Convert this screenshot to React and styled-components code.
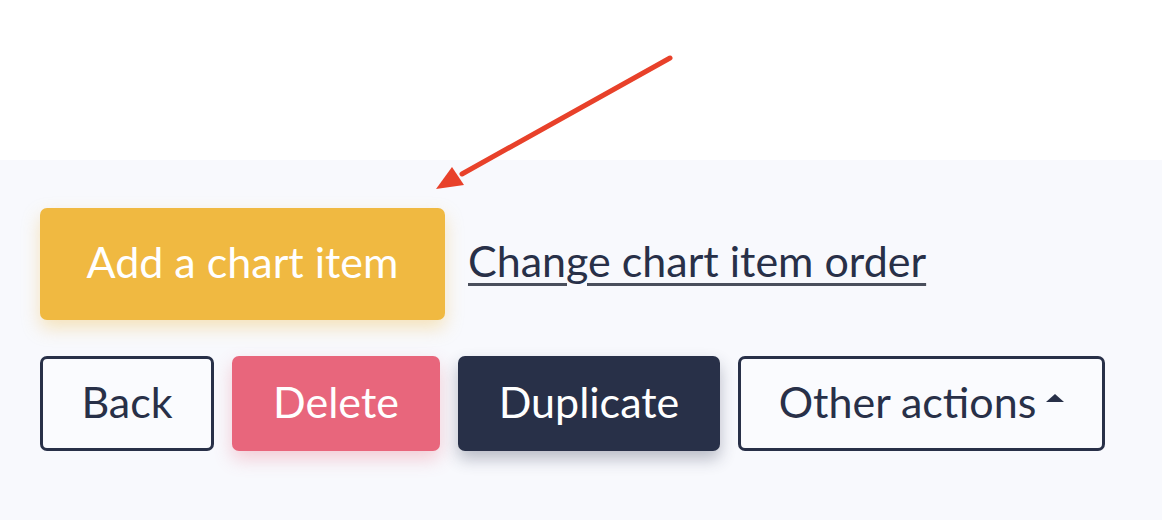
import React from "react";
import styled, { createGlobalStyle, css } from "styled-components";

const GlobalStyle = createGlobalStyle`
  html, body {
    margin: 0;
    padding: 0;
    background: #ffffff;
    font-family: Lato, "Noto Sans", "Liberation Sans", sans-serif;
  }
`;

const Page = styled.div`
  position: relative;
  width: 1162px;
  height: 520px;
  display: flex;
  flex-direction: column;
  overflow: hidden;
`;

const TopSpace = styled.div`
  height: 160px;
  background: #ffffff;
`;

const Panel = styled.div`
  flex: 1;
  background: #f8f9fd;
  padding: 48px 40px 0;
  display: flex;
  flex-direction: column;
  gap: 36px;
`;

const Row = styled.div`
  display: flex;
  align-items: center;
  gap: ${(p) => p.$gap || 18}px;
`;

const base = css`
  box-sizing: border-box;
  font-family: inherit;
  font-size: 43px;
  line-height: 1;
  border-radius: 7px;
  cursor: pointer;
  display: inline-flex;
  align-items: center;
  justify-content: center;
  gap: 10px;
  padding: 0 0 5px;
`;

const variants = {
  yellow: css`
    background: #f0b941;
    color: #ffffff;
    border: none;
    box-shadow: 0 8px 18px rgba(240, 185, 65, 0.35);
  `,
  danger: css`
    background: #e8667c;
    color: #ffffff;
    border: none;
    box-shadow: 0 8px 18px rgba(232, 102, 124, 0.3);
  `,
  dark: css`
    background: #283048;
    color: #ffffff;
    border: none;
    box-shadow: 0 8px 16px rgba(40, 48, 72, 0.3);
  `,
  outline: css`
    background: #fafbfe;
    color: #283048;
    border: 3px solid #283048;
  `,
};

const Button = styled.button`
  ${base}
  width: ${(p) => p.$w}px;
  height: ${(p) => p.$h || 95}px;
  ${(p) => variants[p.$variant]}
`;

const TextLink = styled.a`
  font-size: 43px;
  color: #283048;
  text-decoration: underline;
  text-decoration-thickness: 3px;
  text-underline-offset: 6px;
  text-decoration-color: #4a4f5c;
  cursor: pointer;
  margin-top: -8px;
`;

const Caret = styled.span`
  width: 0;
  height: 0;
  border-left: 9px solid transparent;
  border-right: 9px solid transparent;
  border-bottom: 8px solid #283048;
  margin-top: -6px;
`;

const Arrow = styled.svg`
  position: absolute;
  left: 0;
  top: 0;
  pointer-events: none;
`;

export default function App() {
  return (
    <Page>
      <GlobalStyle />
      <TopSpace />
      <Panel>
        <Row $gap={23}>
          <Button $variant="yellow" $w={405} $h={112}>
            Add a chart item
          </Button>
          <TextLink>Change chart item order</TextLink>
        </Row>
        <Row $gap={18}>
          <Button $variant="outline" $w={174}>
            Back
          </Button>
          <Button $variant="danger" $w={208}>
            Delete
          </Button>
          <Button $variant="dark" $w={262}>
            Duplicate
          </Button>
          <Button $variant="outline" $w={367}>
            Other actions
            <Caret />
          </Button>
        </Row>
      </Panel>
      <Arrow width="1162" height="520" viewBox="0 0 1162 520">
        <line
          x1="670"
          y1="58"
          x2="462"
          y2="174"
          stroke="#e8412a"
          strokeWidth="5"
          strokeLinecap="round"
        />
        <polygon points="436,189 452,167 464,185" fill="#e8412a" />
      </Arrow>
    </Page>
  );
}
